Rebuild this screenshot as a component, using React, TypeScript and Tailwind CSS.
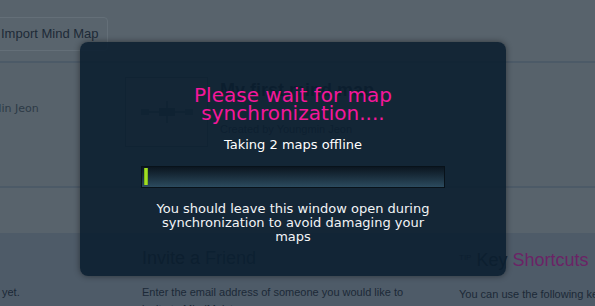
import React from "react";

// Page behind the dialog, already dimmed by the overlay
function PageBehind() {
  return (
    <div className="w-[595px] h-[306px] overflow-hidden bg-[#58636c] font-['Liberation_Sans',Arial,sans-serif] text-[#1c2937]">
      {/* toolbar */}
      <div className="h-[61px] flex items-start pt-[17px]">
        <div className="ml-[-6px] h-[34px] pl-[6px] pr-[8px] border border-[#646f78] rounded-[4px] bg-[#59646d] flex items-center text-[13px] leading-[32px] text-[#1d2a37]">
          Import Mind Map
        </div>
      </div>
      <div className="h-[2px] bg-[#4c5a67]" />

      {/* map list */}
      <div className="h-[123px] flex bg-[#57626b]">
        <div className="w-[125px] shrink-0 pt-[39px]">
          <div className="ml-[-8px] font-['DejaVu_Sans',Verdana,sans-serif] text-[11px] leading-[14px] text-[#2d3a46]">
            Min Jeon
          </div>
        </div>
        <div className="mt-[14px] w-[83px] h-[70px] shrink-0 border border-[#3e4a56] bg-[#5a656e] flex items-center justify-center">
          <svg width="56" height="30" viewBox="0 0 56 30">
            <rect x="20" y="11" width="16" height="8" fill="#34424f" />
            <path d="M20 15 H8 M36 15 H48 M28 11 V4 M28 19 V26" stroke="#3c4a57" strokeWidth="2" />
            <rect x="2" y="12" width="8" height="6" fill="#3c4a57" />
            <rect x="46" y="12" width="8" height="6" fill="#3c4a57" />
          </svg>
        </div>
        <div className="ml-[12px] pt-[17px] flex flex-col">
          <div className="text-[18px] leading-[20px] font-bold text-[#16222f]">My first mind map</div>
          <div className="mt-[22px] text-[11px] leading-[14px] text-[#24313e]">Created by Youngmin Jeon</div>
        </div>
      </div>
      <div className="h-[2px] bg-[#4c5a67]" />
      <div className="h-[45px] bg-[#58636c]" />

      {/* lower panels */}
      <div className="h-[73px] bg-[#4e5b68] flex pt-[14px]">
        <div className="w-[142px] shrink-0 pl-[2px] pt-[37px] text-[11px] leading-[17px]">yet.</div>
        <div className="w-[317px] shrink-0 flex flex-col">
          <div className="text-[18px] leading-[22px] text-[#1b2836]">
            Invite a <span className="text-[#1d3045]">Friend</span>
          </div>
          <div className="mt-[15px] w-[270px] text-[11px] leading-[17px]">
            Enter the email address of someone you would like to invite to MindMeister.
          </div>
        </div>
        <div className="w-[200px] shrink-0 flex flex-col whitespace-nowrap">
          <div className="text-[18px] leading-[22px] text-[#1b2836]">
            <span className="text-[8px] align-[6px] mr-[5px]">TIP</span>Key{" "}
            <span className="text-[#6b2366]">Shortcuts</span>
          </div>
          <div className="mt-[15px] text-[11px] leading-[17px]">
            You can use the following keyboard shortcuts
          </div>
        </div>
      </div>
    </div>
  );
}

function SyncDialog() {
  return (
    <div className="absolute left-[80px] top-[42px] w-[426px] h-[234px] rounded-[8px] bg-[#0a1e2f]/[0.88] shadow-[0_0_6px_rgba(0,0,0,0.45)] flex flex-col items-center pt-[44px] font-['DejaVu_Sans',Verdana,sans-serif]">
      <div className="text-[20px] leading-[18px] text-[#f5179b] text-center">
        Please wait for map
        <br />
        synchronization....
      </div>
      <div className="mt-[15px] text-[13px] leading-[16px] text-white">Taking 2 maps offline</div>
      <div className="mt-[13px] w-[304px] h-[22px] border border-[#08121a] bg-gradient-to-b from-[#0b1620] to-[#2c4b5f] p-[1px] pb-[2px]">
        <div className="ml-[0.5px] w-[4px] h-full bg-gradient-to-r from-[#6ea815] via-[#b3ef28] to-[#6ea815]" />
      </div>
      <div className="mt-[14px] w-[290px] text-[13px] leading-[14px] text-[#f2f4f6] text-center">
        You should leave this window open during synchronization to avoid damaging your maps
      </div>
    </div>
  );
}

export default function App() {
  return (
    <div className="relative w-[595px] h-[306px] overflow-hidden">
      <PageBehind />
      <SyncDialog />
    </div>
  );
}
